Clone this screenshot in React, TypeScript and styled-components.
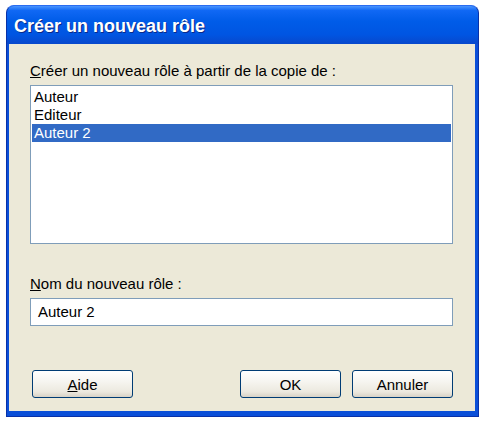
import React from 'react';
import styled, { createGlobalStyle } from 'styled-components';

const GlobalStyle = createGlobalStyle`
  html, body {
    margin: 0;
    padding: 0;
    background: #ffffff;
  }
  body {
    font-family: 'Liberation Sans', Arial, sans-serif;
  }
`;

const roles = ['Auteur', 'Editeur', 'Auteur 2'];

function App() {
  const selected = 'Auteur 2';

  return (
    <>
      <GlobalStyle />
      <Page>
        <Window>
          <TitleBar>
            <Title>Créer un nouveau rôle</Title>
          </TitleBar>

          <Body>
            <Field>
              <Label>
                <u>C</u>réer un nouveau rôle à partir de la copie de :
              </Label>
              <ListBox>
                {roles.map((role) => (
                  <ListItem key={role} $selected={role === selected}>
                    {role}
                  </ListItem>
                ))}
              </ListBox>
            </Field>

            <Field>
              <Label>
                <u>N</u>om du nouveau rôle :
              </Label>
              <TextInput>Auteur 2</TextInput>
            </Field>

            <ButtonRow>
              <Button>
                <u>A</u>ide
              </Button>
              <ButtonGroup>
                <Button>OK</Button>
                <Button>Annuler</Button>
              </ButtonGroup>
            </ButtonRow>
          </Body>
        </Window>
      </Page>
    </>
  );
}

export default App;

const Page = styled.div`
  padding: 5px 2px 6px 6px;
`;

const Window = styled.div`
  width: 473px;
  height: 412px;
  box-sizing: border-box;
  display: flex;
  flex-direction: column;
  background: #0a4fd8;
  border-radius: 8px 8px 0 0;
  border: 1px solid #0831a8;
  border-top-color: #2a6cf0;
  overflow: hidden;
`;

const TitleBar = styled.div`
  height: 38px;
  flex-shrink: 0;
  display: flex;
  align-items: center;
  padding: 2px 0 0 7px;
  box-sizing: border-box;
  background: linear-gradient(
    to bottom,
    #4a94ff 0%,
    #1068f4 12%,
    #005ce8 40%,
    #0055e2 75%,
    #0848cc 100%
  );
`;

const Title = styled.div`
  color: #ffffff;
  font-family: 'Liberation Sans', Arial, sans-serif;
  font-weight: 700;
  font-size: 18px;
  text-shadow: 1px 1px 0 #0a2a8a;
`;

const Body = styled.div`
  flex: 1;
  display: flex;
  flex-direction: column;
  margin: 0 3px 5px 2px;
  padding: 18px 22px 13px 21px;
  background: #ece9d8;
  color: #000000;
  font-size: 15px;
`;

const Field = styled.div`
  display: flex;
  flex-direction: column;
  gap: 6px;

  & + & {
    margin-top: 31px;
  }
`;

const Label = styled.div`
  line-height: 17px;
  white-space: nowrap;
`;

const ListBox = styled.div`
  height: 159px;
  box-sizing: border-box;
  border: 1px solid #7f9db9;
  background: #ffffff;
  padding: 2px 1px;
`;

const ListItem = styled.div<{ $selected?: boolean }>`
  height: 18px;
  line-height: 18px;
  padding-left: 2px;
  background: ${(p) => (p.$selected ? '#316ac5' : 'transparent')};
  color: ${(p) => (p.$selected ? '#ffffff' : '#000000')};
`;

const TextInput = styled.div`
  height: 28px;
  box-sizing: border-box;
  border: 1px solid #7f9db9;
  background: #ffffff;
  padding-left: 7px;
  line-height: 26px;
`;

const ButtonRow = styled.div`
  margin-top: auto;
  display: flex;
  justify-content: space-between;
  padding-left: 2px;
`;

const ButtonGroup = styled.div`
  display: flex;
  gap: 11px;
`;

const Button = styled.div`
  width: 101px;
  height: 28px;
  box-sizing: border-box;
  border: 1px solid #003c74;
  border-radius: 3px;
  background: linear-gradient(to bottom, #ffffff 0%, #f6f5f0 40%, #ece9df 80%, #d8d2c6 100%);
  display: flex;
  align-items: center;
  justify-content: center;
  font-size: 15px;
  color: #000000;
`;
